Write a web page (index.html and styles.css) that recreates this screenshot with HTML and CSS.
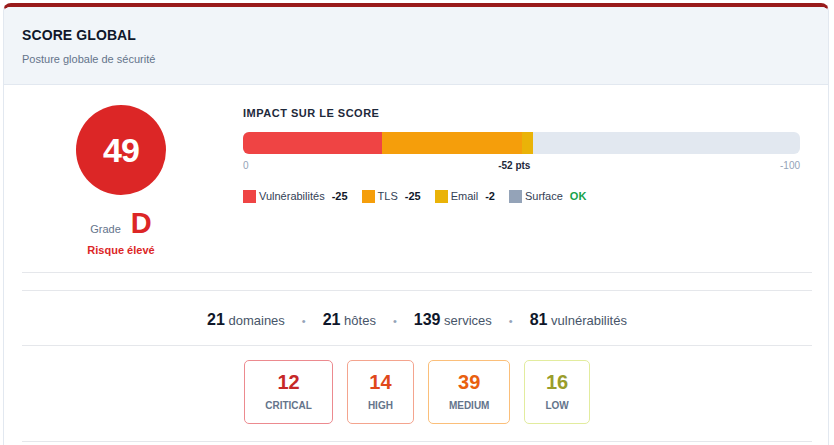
FILE: index.html
```html
<!DOCTYPE html>
<html lang="fr">
<head>
<meta charset="utf-8">
<title>Score global</title>
<link rel="stylesheet" href="styles.css">
</head>
<body>
<div class="card">
  <div class="card-header">
    <div class="card-title">SCORE GLOBAL</div>
    <div class="card-subtitle">Posture globale de sécurité</div>
  </div>
  <div class="card-body">
    <div class="overview">
      <div class="score-col">
        <div class="score-circle">49</div>
        <div class="grade-row"><span class="grade-label">Grade</span><span class="grade-letter">D</span></div>
        <div class="risk">Risque élevé</div>
      </div>
      <div class="impact-col">
        <div class="impact-title">IMPACT SUR LE SCORE</div>
        <div class="bar">
          <div class="seg seg-vuln" style="width:25%"></div>
          <div class="seg seg-tls" style="width:25%"></div>
          <div class="seg seg-email" style="width:2%"></div>
        </div>
        <div class="scale">
          <span class="scale-end">0</span>
          <span class="scale-mid">-52 pts</span>
          <span class="scale-end">-100</span>
        </div>
        <div class="legend">
          <div class="legend-item"><span class="swatch sw-vuln"></span><span class="legend-label">Vulnérabilités</span><span class="legend-value">-25</span></div>
          <div class="legend-item"><span class="swatch sw-tls"></span><span class="legend-label">TLS</span><span class="legend-value">-25</span></div>
          <div class="legend-item"><span class="swatch sw-email"></span><span class="legend-label">Email</span><span class="legend-value">-2</span></div>
          <div class="legend-item"><span class="swatch sw-surface"></span><span class="legend-label">Surface</span><span class="legend-value ok">OK</span></div>
        </div>
      </div>
    </div>
    <div class="stats">
      <span class="stat"><b>21</b> domaines</span>
      <span class="dot">•</span>
      <span class="stat"><b>21</b> hôtes</span>
      <span class="dot">•</span>
      <span class="stat"><b>139</b> services</span>
      <span class="dot">•</span>
      <span class="stat"><b>81</b> vulnérabilités</span>
    </div>
    <div class="severities">
      <div class="sev sev-critical"><div class="sev-num">12</div><div class="sev-label">CRITICAL</div></div>
      <div class="sev sev-high"><div class="sev-num">14</div><div class="sev-label">HIGH</div></div>
      <div class="sev sev-medium"><div class="sev-num">39</div><div class="sev-label">MEDIUM</div></div>
      <div class="sev sev-low"><div class="sev-num">16</div><div class="sev-label">LOW</div></div>
    </div>
  </div>
</div>
</body>
</html>
```

FILE: styles.css
```css
* { box-sizing: border-box; }
html, body { margin: 0; background: #ffffff; }
body {
  padding: 3px 5px 0 3px;
  font-family: "Liberation Sans", Arial, sans-serif;
  color: #0f172a;
}
.card {
  border: 1px solid #e2e8f0;
  border-top: 4px solid #991b1b;
  border-radius: 8px;
  overflow: hidden;
  background: #fff;
  height: 460px;
}
.card-header {
  background: #f1f5f9;
  border-bottom: 1px solid #e2e8f0;
  padding: 19px 18px 18px 18px;
}
.card-title {
  font-size: 14px;
  font-weight: bold;
  line-height: 18px;
  letter-spacing: 0.1px;
  color: #0f172a;
}
.card-subtitle {
  margin-top: 8px;
  font-size: 11px;
  line-height: 14px;
  color: #64748b;
}
.card-body {
  padding: 0 16px 0 18px;
}
.overview {
  display: flex;
  gap: 23px;
  padding: 20px 12px 15px 0;
  border-bottom: 1px solid #e5e7eb;
}
.score-col {
  width: 198px;
  display: flex;
  flex-direction: column;
  align-items: center;
}
.score-circle {
  width: 90px;
  height: 90px;
  border-radius: 50%;
  background: #dc2626;
  color: #fff;
  font-weight: bold;
  font-size: 34px;
  letter-spacing: -1px;
  display: flex;
  align-items: center;
  justify-content: center;
}
.grade-row {
  margin-top: 13px;
  height: 30px;
  display: flex;
  align-items: baseline;
  gap: 10px;
}
.grade-label {
  font-size: 11px;
  line-height: 12px;
  color: #64748b;
}
.grade-letter {
  font-size: 29px;
  line-height: 30px;
  font-weight: bold;
  color: #dc2626;
}
.risk {
  margin-top: 5px;
  font-size: 11px;
  line-height: 14px;
  font-weight: bold;
  color: #dc2626;
}
.impact-col {
  flex: 1;
}
.impact-title {
  font-size: 11px;
  line-height: 16px;
  font-weight: bold;
  letter-spacing: 0.5px;
  color: #1e293b;
}
.bar {
  margin-top: 11px;
  height: 22px;
  border-radius: 6px;
  background: #e2e8f0;
  display: flex;
  overflow: hidden;
}
.seg { height: 100%; }
.seg-vuln { background: #ef4444; }
.seg-tls { background: #f59e0b; }
.seg-email { background: #eab308; }
.scale {
  margin-top: 6px;
  display: flex;
  justify-content: space-between;
  font-size: 10px;
  line-height: 12px;
}
.scale-end { color: #94a3b8; }
.scale-mid { color: #1e293b; font-weight: bold; }
.legend {
  margin-top: 17px;
  display: flex;
  gap: 14px;
  font-size: 11px;
  line-height: 14px;
}
.legend-item {
  display: flex;
  align-items: center;
}
.swatch {
  width: 13px;
  height: 13px;
  margin-right: 3px;
}
.sw-vuln { background: #ef4444; }
.sw-tls { background: #f59e0b; }
.sw-email { background: #eab308; }
.sw-surface { background: #94a3b8; }
.legend-label { color: #334155; }
.legend-value {
  margin-left: 7px;
  font-weight: bold;
  color: #0f172a;
}
.legend-value.ok { color: #16a34a; }
.stats {
  margin-top: 17px;
  border-top: 1px solid #e5e7eb;
  border-bottom: 1px solid #e5e7eb;
  padding: 19px 0 14px;
  display: flex;
  justify-content: center;
  align-items: baseline;
  line-height: 20px;
  font-size: 13px;
  color: #475569;
}
.stat b {
  font-size: 16px;
  color: #0f172a;
}
.dot {
  margin: 0 17px;
  color: #94a3b8;
  font-size: 11px;
}
.severities {
  display: flex;
  justify-content: center;
  gap: 14px;
  padding: 14px 0 17px;
  border-bottom: 1px solid #e5e7eb;
}
.sev {
  border: 1px solid;
  border-radius: 5px;
  padding: 10px 20px 11px;
  text-align: center;
}
.sev-num {
  font-size: 20px;
  line-height: 23px;
  font-weight: bold;
}
.sev-label {
  margin-top: 6px;
  font-size: 10px;
  line-height: 12px;
  font-weight: bold;
  color: #64748b;
}
.sev-critical { border-color: #ec8a8f; }
.sev-critical .sev-num { color: #c62828; }
.sev-high { border-color: #f4a48e; }
.sev-high .sev-num { color: #e0481c; }
.sev-medium { border-color: #fbbf7a; }
.sev-medium .sev-num { color: #e9600f; }
.sev-low { border-color: #e2ec9e; }
.sev-low .sev-num { color: #9a9d2a; }
```
